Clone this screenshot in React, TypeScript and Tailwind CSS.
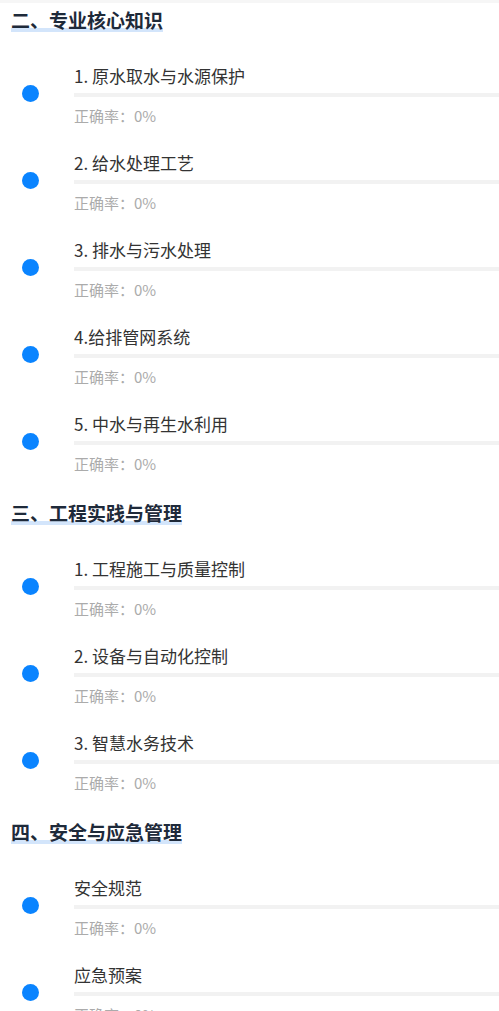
const SECTIONS = [
  {
    title: "二、专业核心知识",
    items: [
      "1. 原水取水与水源保护",
      "2. 给水处理工艺",
      "3. 排水与污水处理",
      "4.给排管网系统",
      "5. 中水与再生水利用",
    ],
  },
  {
    title: "三、工程实践与管理",
    items: ["1. 工程施工与质量控制", "2. 设备与自动化控制", "3. 智慧水务技术"],
  },
  {
    title: "四、安全与应急管理",
    items: ["安全规范", "应急预案"],
  },
];

const Item = ({ name }: { name: string }) => (
  <div className="flex pl-[22px] mb-[25px]">
    <div className="w-[17px] h-[17px] mt-[22px] rounded-full bg-[#0a84ff] shrink-0" />
    <div className="flex-1 ml-[35px] flex flex-col">
      <div className="h-[24px] text-[17px] leading-[25px] text-[#333]">{name}</div>
      <div className="h-[4px] mt-[6px] bg-[#f2f2f2]" />
      <div className="h-[20px] text-[15px] leading-[21px] mt-[8px] text-[#ababab]">正确率：0%</div>
    </div>
  </div>
);

export default function App() {
  return (
    <div
      className="w-[499px] h-[1011px] overflow-hidden bg-white"
      style={{ fontFamily: '"Noto Sans CJK SC", "Noto Sans", sans-serif' }}
    >
      <div className="h-[3px] bg-[#f6f6f6]" />
      <div className="h-[2px]" />
      {SECTIONS.map((s) => (
        <div key={s.title}>
          {/* heading */}
          <div className="flex pl-[11px] pt-[3px] mb-[31px]">
            <span className="h-[24px] text-[19px] leading-[24px] font-bold text-[#1e2a3a] bg-[linear-gradient(to_top,#d3e5fb_4px,transparent_4px)]">
              {s.title}
            </span>
          </div>
          {s.items.map((it) => (
            <Item key={it} name={it} />
          ))}
        </div>
      ))}
    </div>
  );
}
